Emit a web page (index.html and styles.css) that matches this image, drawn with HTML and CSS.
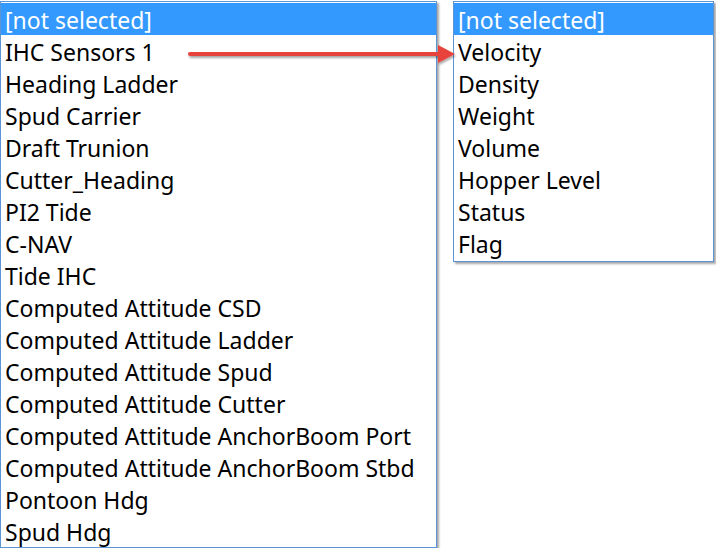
FILE: index.html
```html
<!DOCTYPE html>
<html lang="en">
<head>
  <meta charset="UTF-8" />
  <title>Source mapping</title>
  <link rel="stylesheet" href="styles.css">
</head>
<body>
  <div class="stage">
    <ul class="list list-source">
      <li class="selected">[not selected]</li>
      <li>IHC Sensors 1</li>
      <li>Heading Ladder</li>
      <li>Spud Carrier</li>
      <li>Draft Trunion</li>
      <li>Cutter_Heading</li>
      <li>PI2 Tide</li>
      <li>C-NAV</li>
      <li>Tide IHC</li>
      <li>Computed Attitude CSD</li>
      <li>Computed Attitude Ladder</li>
      <li>Computed Attitude Spud</li>
      <li>Computed Attitude Cutter</li>
      <li>Computed Attitude AnchorBoom Port</li>
      <li>Computed Attitude AnchorBoom Stbd</li>
      <li>Pontoon Hdg</li>
      <li>Spud Hdg</li>
    </ul>

    <ul class="list list-field">
      <li class="selected">[not selected]</li>
      <li>Velocity</li>
      <li>Density</li>
      <li>Weight</li>
      <li>Volume</li>
      <li>Hopper Level</li>
      <li>Status</li>
      <li>Flag</li>
    </ul>

    <svg class="arrow" width="280" height="30" viewBox="0 0 280 30">
      <defs>
        <filter id="shade" x="-5%" y="-50%" width="110%" height="200%">
          <feDropShadow dx="1" dy="2" stdDeviation="1" flood-color="#000" flood-opacity="0.35"/>
        </filter>
      </defs>
      <g filter="url(#shade)" fill="#e8423d" stroke="#e8423d">
        <line x1="4" y1="14" x2="254" y2="14" stroke-width="4" stroke-linecap="round"/>
        <polygon points="252,5 269,14 252,23" stroke="none"/>
      </g>
    </svg>
  </div>
</body>
</html>
```

FILE: styles.css
```css
* { box-sizing: border-box; }
body {
  margin: 0; padding: 0;
  background: #fff;
  font-family: "Noto Sans", "Open Sans", sans-serif;
}
.stage {
  position: relative;
  display: flex; align-items: flex-start; gap: 16px;
  padding-top: 1px;
}
.list {
  list-style: none; margin: 0; padding: 1px 0 0;
  background: #fff;
  border: 1px solid #5b95d8;
  box-shadow: 2px 2px 2px rgba(0,0,0,0.35);
}
.list li {
  height: 32px; line-height: 29px;
  padding: 3px 4px 0;
  font-size: 23px; color: #000;
  white-space: nowrap;
}
.list li.selected { background: #3399ff; color: #fff; }
.list-source { width: 437px; height: 547px; }
.list-field { width: 261px; height: 261px; padding-top: 1px; }
.arrow { position: absolute; left: 186px; top: 40px; }
```
